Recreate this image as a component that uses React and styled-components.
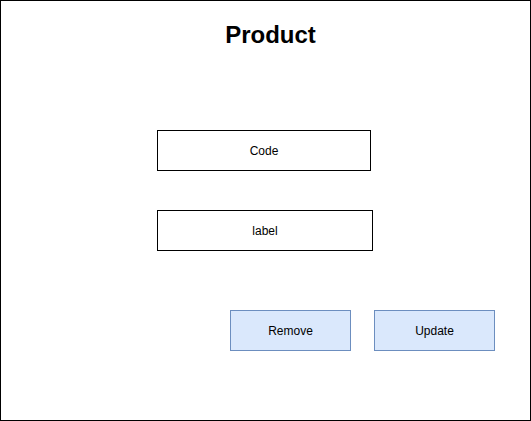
import React from "react";
import styled, { createGlobalStyle } from "styled-components";

const Global = createGlobalStyle`
  html, body { margin: 0; padding: 0; background: #fff; }
  body { font-family: "Liberation Sans", Arial, Helvetica, sans-serif; }
`;

const Frame = styled.div`
  box-sizing: border-box;
  width: 531px;
  height: 421px;
  border: 1px solid #000;
  background: #fff;
  display: flex;
  flex-direction: column;
`;

const Title = styled.h1`
  margin: 20px 0 0 0;
  padding-left: 10px;
  font-size: 24px;
  line-height: 28px;
  font-weight: bold;
  text-align: center;
  color: #000;
`;

const Fields = styled.div`
  display: flex;
  flex-direction: column;
  gap: 39px;
  margin: 81px 0 0 156px;
`;

const Field = styled.div`
  box-sizing: border-box;
  width: ${(p) => p.$w}px;
  height: 41px;
  border: 1px solid #000;
  background: #fff;
  display: flex;
  align-items: center;
  justify-content: center;
  font-size: 12px;
  color: #000;
`;

const Actions = styled.div`
  display: flex;
  gap: 23px;
  margin: 59px 0 0 229px;
`;

const Button = styled.div`
  box-sizing: border-box;
  width: 121px;
  height: 41px;
  border: 1px solid #6c8ebf;
  background: #dae8fc;
  display: flex;
  align-items: center;
  justify-content: center;
  font-size: 12px;
  color: #000;
`;

export default function App() {
  return (
    <>
      <Global />
      <Frame>
        <Title>Product</Title>
        <Fields>
          <Field $w={214}>Code</Field>
          <Field $w={216}>label</Field>
        </Fields>
        <Actions>
          <Button>Remove</Button>
          <Button>Update</Button>
        </Actions>
      </Frame>
    </>
  );
}
